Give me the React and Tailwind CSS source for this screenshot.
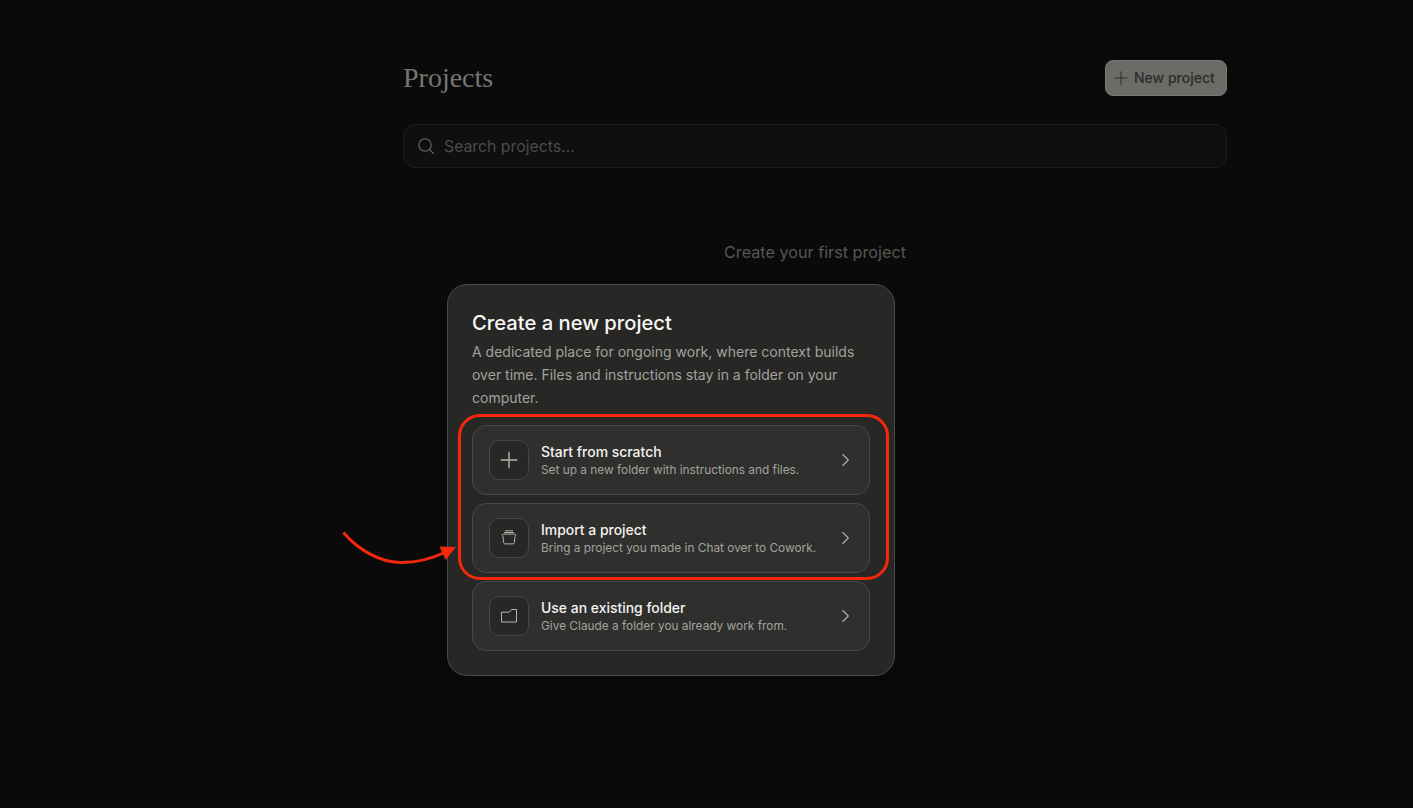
import React from "react";

const sans = "font-['Inter','Liberation_Sans',sans-serif]";

function PlusIcon({ className, width = 1.2 }) {
  return (
    <svg className={className} viewBox="0 0 20 20" fill="none" stroke="currentColor" strokeWidth={width} strokeLinecap="round">
      <path d="M10 2.2v15.600M2.200 10h15.600" />
    </svg>
  );
}

function StackIcon() {
  return (
    <svg className="w-5 h-5" viewBox="0 0 20 20" fill="none" stroke="currentColor" strokeWidth="1">
      <path d="M6.500 2.800h7" strokeLinecap="round" />
      <path d="M5.500 4.500h9" strokeLinecap="round" />
      <path d="M3.300 7.300c0-.7.500-1.200 1.200-1.200h11c.7 0 1.200.500 1.200 1.200 0 .5-.3.9-.7 1l-.6 6.200c-.1.9-.7 1.400-1.500 1.400H6.100c-.8 0-1.400-.5-1.500-1.400L4 8.300c-.4-.1-.7-.5-.7-1z" strokeLinejoin="round" />
    </svg>
  );
}

function FolderIcon() {
  return (
    <svg className="w-5 h-5" viewBox="0 0 20 20" fill="none" stroke="currentColor" strokeWidth="1" strokeLinejoin="round">
      <path d="M2.500 6.200h7.700l2.300-2.700h5v12.500h-15z" />
    </svg>
  );
}

function Chevron() {
  return (
    <svg className="w-5 h-5 text-[#b0b0aa]" viewBox="0 0 20 20" fill="none" stroke="currentColor" strokeWidth="1.1" strokeLinecap="round" strokeLinejoin="round">
      <path d="M7.800 4.500 13.300 10 7.800 15.500" />
    </svg>
  );
}

function Row({ icon, title, sub }) {
  return (
    <div className="h-[70px] rounded-[14px] border border-[#484846] bg-[#2f2f2e] pl-4 pr-[14px] flex items-center">
      <div className="w-10 h-10 shrink-0 rounded-[10px] border border-[#474745] bg-[#272726] flex items-center justify-center text-[#b4b4ae]">
        {icon}
      </div>
      <div className="ml-3 flex-1 min-w-0 pt-[2px]">
        <div className="text-[13.950px] leading-[17px] font-medium text-[#f4f3ee]">{title}</div>
        <div className="mt-[2px] text-[11.850px] leading-[17px] text-[#a3a29c]">{sub}</div>
      </div>
      <Chevron />
    </div>
  );
}

export default function App() {
  return (
    <div className={`${sans} relative w-full h-[808px] overflow-hidden bg-[#0a0a0a]`}>
      <div className="ml-[403px] w-[824px] pt-[60px]">
        <div className="flex items-center justify-between h-9">
          <h1 className="font-['Liberation_Serif',serif] text-[28px] leading-[34px] text-[#767673]">Projects</h1>
          <button className="h-9 w-[122px] rounded-lg bg-[#6b6b68] border border-[#777774] flex items-center pl-[7px] gap-[5px] text-[14px] leading-[32px] font-medium text-[#2b2b29]">
            <PlusIcon className="w-4 h-4" />
            <span className="-mt-px">New project</span>
          </button>
        </div>
        <div className="mt-7 h-11 rounded-xl border border-[#1c1c1b] bg-[#0f0f0f] flex items-center pl-[13px]">
          <svg className="w-[18px] h-[18px] text-[#6b6b68]" viewBox="0 0 18 18" fill="none" stroke="currentColor" strokeWidth="1.1" strokeLinecap="round">
            <circle cx="8" cy="8" r="6.2" />
            <path d="M12.600 12.600 16.500 16.500" />
          </svg>
          <span className="ml-[9px] pt-[2px] text-[15.800px] text-[#4b4b48]">Search projects...</span>
        </div>
        <div className="mt-[72px] text-center text-[16.200px] leading-6 text-[#565653]">Create your first project</div>
      </div>

      <div className="absolute left-[447px] top-[284px] w-[448px] h-[392px] rounded-[20px] border border-[#4a4a48] bg-[#272726] px-6 pt-6 shadow-lg">
        <h2 className="text-[20.200px] leading-7 font-medium text-[#f8f7f3]">Create a new project</h2>
        <p className="mt-[3px] text-[14px] leading-[23px] text-[#a3a29c]">
          A dedicated place for ongoing work, where context builds over time. Files and instructions stay in a folder on your computer.
        </p>
        <div className="mt-4 flex flex-col gap-2">
          <Row icon={<PlusIcon className="w-5 h-5" width={1.4} />} title="Start from scratch" sub="Set up a new folder with instructions and files." />
          <Row icon={<StackIcon />} title="Import a project" sub="Bring a project you made in Chat over to Cowork." />
          <Row icon={<FolderIcon />} title="Use an existing folder" sub="Give Claude a folder you already work from." />
        </div>
      </div>

      <div className="absolute left-[458px] top-[414px] w-[431px] h-[166px] rounded-[22px] border-[3px] border-[#f5270c]" />
      <svg className="absolute left-[330px] top-[510px] w-[150px] h-[80px]" viewBox="0 0 150 80" fill="none">
        <path d="M13.500 22.500C28 40 50 52 70 52.500c16 .4 32-4 46-10.500" stroke="#f5270c" strokeWidth="3" />
        <path d="M126 37 109.500 36.500 115.500 50z" fill="#f5270c" />
      </svg>
    </div>
  );
}
